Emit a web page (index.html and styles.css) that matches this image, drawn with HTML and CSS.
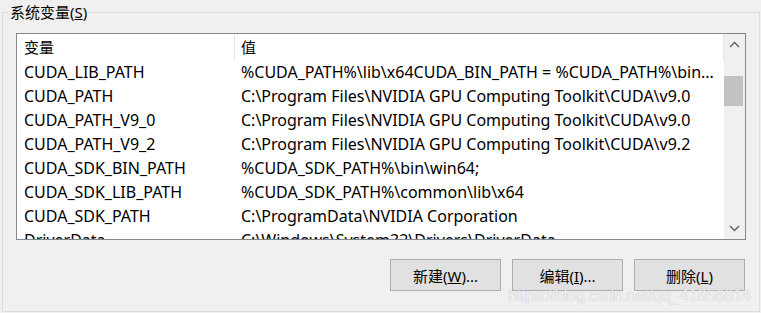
FILE: index.html
```html
<!DOCTYPE html>
<html lang="zh-CN">
<head>
    <meta charset="UTF-8">
    <title>系统变量</title>
    <link rel="stylesheet" href="styles.css">
</head>
<body>
<div class="group">
    <div class="group__label">系统变量(<u>S</u>)</div>

    <div class="list">
        <div class="list__body">
            <div class="list__header">
                <div class="col col--name">变量</div>
                <div class="col col--value">值</div>
            </div>
            <div class="list__rows">
                <div class="row"><div class="col col--name">CUDA_LIB_PATH</div><div class="col col--value">%CUDA_PATH%\lib\x64CUDA_BIN_PATH = %CUDA_PATH%\bin...</div></div>
                <div class="row"><div class="col col--name">CUDA_PATH</div><div class="col col--value">C:\Program Files\NVIDIA GPU Computing Toolkit\CUDA\v9.0</div></div>
                <div class="row"><div class="col col--name">CUDA_PATH_V9_0</div><div class="col col--value">C:\Program Files\NVIDIA GPU Computing Toolkit\CUDA\v9.0</div></div>
                <div class="row"><div class="col col--name">CUDA_PATH_V9_2</div><div class="col col--value">C:\Program Files\NVIDIA GPU Computing Toolkit\CUDA\v9.2</div></div>
                <div class="row"><div class="col col--name">CUDA_SDK_BIN_PATH</div><div class="col col--value">%CUDA_SDK_PATH%\bin\win64;</div></div>
                <div class="row"><div class="col col--name">CUDA_SDK_LIB_PATH</div><div class="col col--value">%CUDA_SDK_PATH%\common\lib\x64</div></div>
                <div class="row"><div class="col col--name">CUDA_SDK_PATH</div><div class="col col--value">C:\ProgramData\NVIDIA Corporation</div></div>
                <div class="row"><div class="col col--name">DriverData</div><div class="col col--value">C:\Windows\System32\Drivers\DriverData</div></div>
            </div>
        </div>

        <div class="scrollbar">
            <div class="scrollbar__arrow">
                <svg width="11" height="7" viewBox="0 0 11 7"><path d="M1 6 L5.5 1.5 L10 6" fill="none" stroke="#606060" stroke-width="1.4"/></svg>
            </div>
            <div class="scrollbar__track">
                <div class="scrollbar__thumb"></div>
            </div>
            <div class="scrollbar__arrow">
                <svg width="11" height="7" viewBox="0 0 11 7"><path d="M1 1 L5.5 5.5 L10 1" fill="none" stroke="#606060" stroke-width="1.4"/></svg>
            </div>
        </div>
    </div>

    <div class="buttons">
        <button class="btn">新建(<u>W</u>)...</button>
        <button class="btn">编辑(<u>I</u>)...</button>
        <button class="btn">删除(<u>L</u>)</button>
    </div>

    <div class="watermark">https://blog.csdn.net/qq_41856814</div>
</div>
</body>
</html>
```

FILE: styles.css
```css
body, html {
    margin: 0;
    height: 100%;
    background-color: #f0f0f0;
    overflow: hidden;
}

body {
    font-family: "Noto Sans", "Noto Sans CJK SC", sans-serif;
    font-size: 15px;
    color: #000;
}

.group {
    position: relative;
    box-sizing: border-box;
    width: 758px;
    height: 300px;
    margin: 12px 0 0 2px;
    border: 1px solid #dcdcdc;
}

.group__label {
    position: absolute;
    top: -11px;
    left: 5px;
    padding: 0 2px;
    line-height: 20px;
    background-color: #f0f0f0;
}

.list {
    display: flex;
    box-sizing: border-box;
    width: 730px;
    height: 207px;
    margin: 20px 0 0 13px;
    border: 1px solid #828790;
    background-color: #fff;
}

.list__body {
    flex: 1;
    overflow: hidden;
}

.list__header {
    display: flex;
    height: 26px;
    align-items: center;
}

.list__header .col--name,
.list__header .col--value {
    border-right: 1px solid #e5e5e5;
    height: 26px;
    line-height: 26px;
}

.row {
    display: flex;
    height: 24px;
    line-height: 24px;
    font-size: 16px;
}

.col {
    white-space: nowrap;
    overflow: hidden;
}

.col--name {
    box-sizing: border-box;
    width: 218px;
    padding-left: 7px;
}

.col--value {
    box-sizing: border-box;
    flex: 1;
    padding-left: 6px;
    text-overflow: ellipsis;
}

.scrollbar {
    display: flex;
    flex-direction: column;
    width: 21px;
    background-color: #f0f0f0;
}

.scrollbar__arrow {
    display: flex;
    align-items: center;
    justify-content: center;
    height: 21px;
}

.scrollbar__track {
    flex: 1;
}

.scrollbar__thumb {
    width: 19px;
    height: 30px;
    margin-top: 21px;
    background-color: #c2c2c2;
}

.buttons {
    display: flex;
    justify-content: flex-end;
    gap: 11px;
    margin-top: 19px;
    padding-right: 14px;
}

.btn {
    box-sizing: border-box;
    width: 111px;
    height: 32px;
    padding: 0;
    border: 1px solid #adadad;
    background-color: #e1e1e1;
    font-family: inherit;
    font-size: 15px;
    color: #000;
}

.watermark {
    position: absolute;
    left: 505px;
    top: 273px;
    font-family: "Liberation Sans", Arial, sans-serif;
    font-size: 17px;
    letter-spacing: -0.55px;
    color: rgba(255, 255, 255, 0.8);
    text-shadow: 0 0 1px rgba(0, 0, 0, 0.28);
}
```
